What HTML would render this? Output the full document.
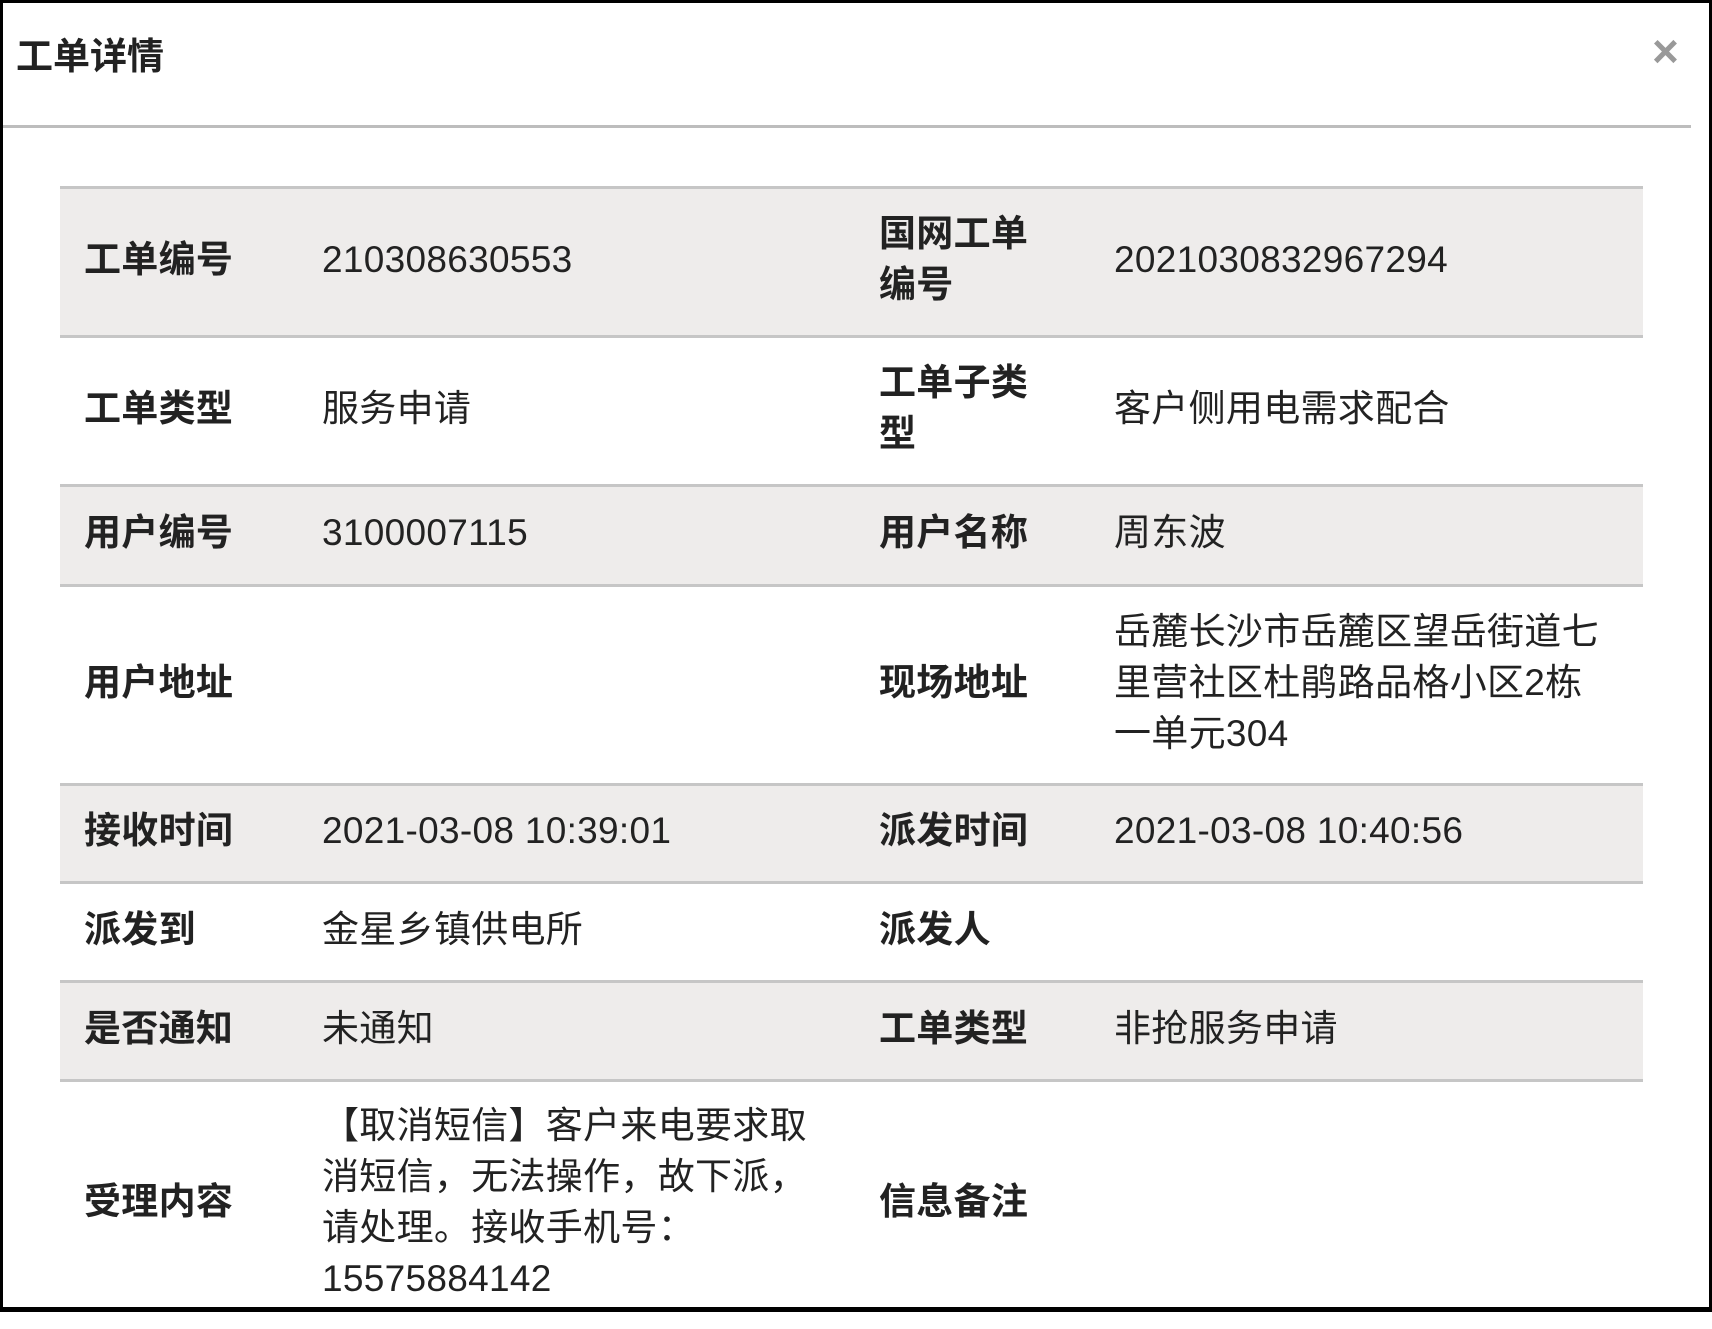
<!DOCTYPE html>
<html><head><meta charset="utf-8"><style>
*{margin:0;padding:0;box-sizing:border-box}
body{width:1712px;height:1312px;background:#fff;position:relative;overflow:hidden;font-family:"Liberation Sans","Noto Sans CJK SC",sans-serif;color:#222}
.frame{position:absolute;left:0;top:0;width:1712px;height:1312px;border:3px solid #000;border-bottom-width:5px}
.title{position:absolute;left:16px;top:26px;font-size:37px;font-weight:bold;color:#222}
.close{position:absolute;left:1652px;top:24px;font-size:46px;font-weight:bold;color:#999}
.hline{position:absolute;left:3px;top:125px;width:1688px;height:3px;background:#bdbdbd}
.row{position:absolute;left:60px;width:1583px;border-top:3px solid #c6c6c6}
.g{background:#eeeceb}
.c{position:absolute;top:0;bottom:6px;display:flex;align-items:center;font-size:37px;line-height:51px;letter-spacing:0.3px}
.l{font-weight:bold}
</style></head><body>
<div class="frame"></div>
<div class="title">工单详情</div>
<div class="close">×</div>
<div class="hline"></div>

<div class="row g" style="top:186px;height:149px">
<div class="c l" style="left:24px">工单编号</div>
<div class="c" style="left:262px">210308630553</div>
<div class="c l" style="left:819px">国网工单<br>编号</div>
<div class="c" style="left:1054px">2021030832967294</div>
</div>
<div class="row" style="top:335px;height:149px">
<div class="c l" style="left:24px">工单类型</div>
<div class="c" style="left:262px">服务申请</div>
<div class="c l" style="left:819px">工单子类<br>型</div>
<div class="c" style="left:1054px">客户侧用电需求配合</div>
</div>
<div class="row g" style="top:484px;height:100px">
<div class="c l" style="left:24px">用户编号</div>
<div class="c" style="left:262px">3100007115</div>
<div class="c l" style="left:819px">用户名称</div>
<div class="c" style="left:1054px">周东波</div>
</div>
<div class="row" style="top:584px;height:199px">
<div class="c l" style="left:24px">用户地址</div>
<div class="c l" style="left:819px">现场地址</div>
<div class="c" style="left:1054px">岳麓长沙市岳麓区望岳街道七<br>里营社区杜鹃路品格小区2栋<br>一单元304</div>
</div>
<div class="row g" style="top:783px;height:98px">
<div class="c l" style="left:24px">接收时间</div>
<div class="c" style="left:262px">2021-03-08 10:39:01</div>
<div class="c l" style="left:819px">派发时间</div>
<div class="c" style="left:1054px">2021-03-08 10:40:56</div>
</div>
<div class="row" style="top:881px;height:99px">
<div class="c l" style="left:24px">派发到</div>
<div class="c" style="left:262px">金星乡镇供电所</div>
<div class="c l" style="left:819px">派发人</div>
</div>
<div class="row g" style="top:980px;height:99px">
<div class="c l" style="left:24px">是否通知</div>
<div class="c" style="left:262px">未通知</div>
<div class="c l" style="left:819px">工单类型</div>
<div class="c" style="left:1054px">非抢服务申请</div>
</div>
<div class="row" style="top:1079px;height:250px">
<div class="c l" style="left:24px;bottom:8px">受理内容</div>
<div class="c" style="left:262px;bottom:8px">【取消短信】客户来电要求取<br>消短信，无法操作，故下派，<br>请处理。接收手机号：<br>15575884142</div>
<div class="c l" style="left:819px;bottom:8px">信息备注</div>
</div>
</body></html>
